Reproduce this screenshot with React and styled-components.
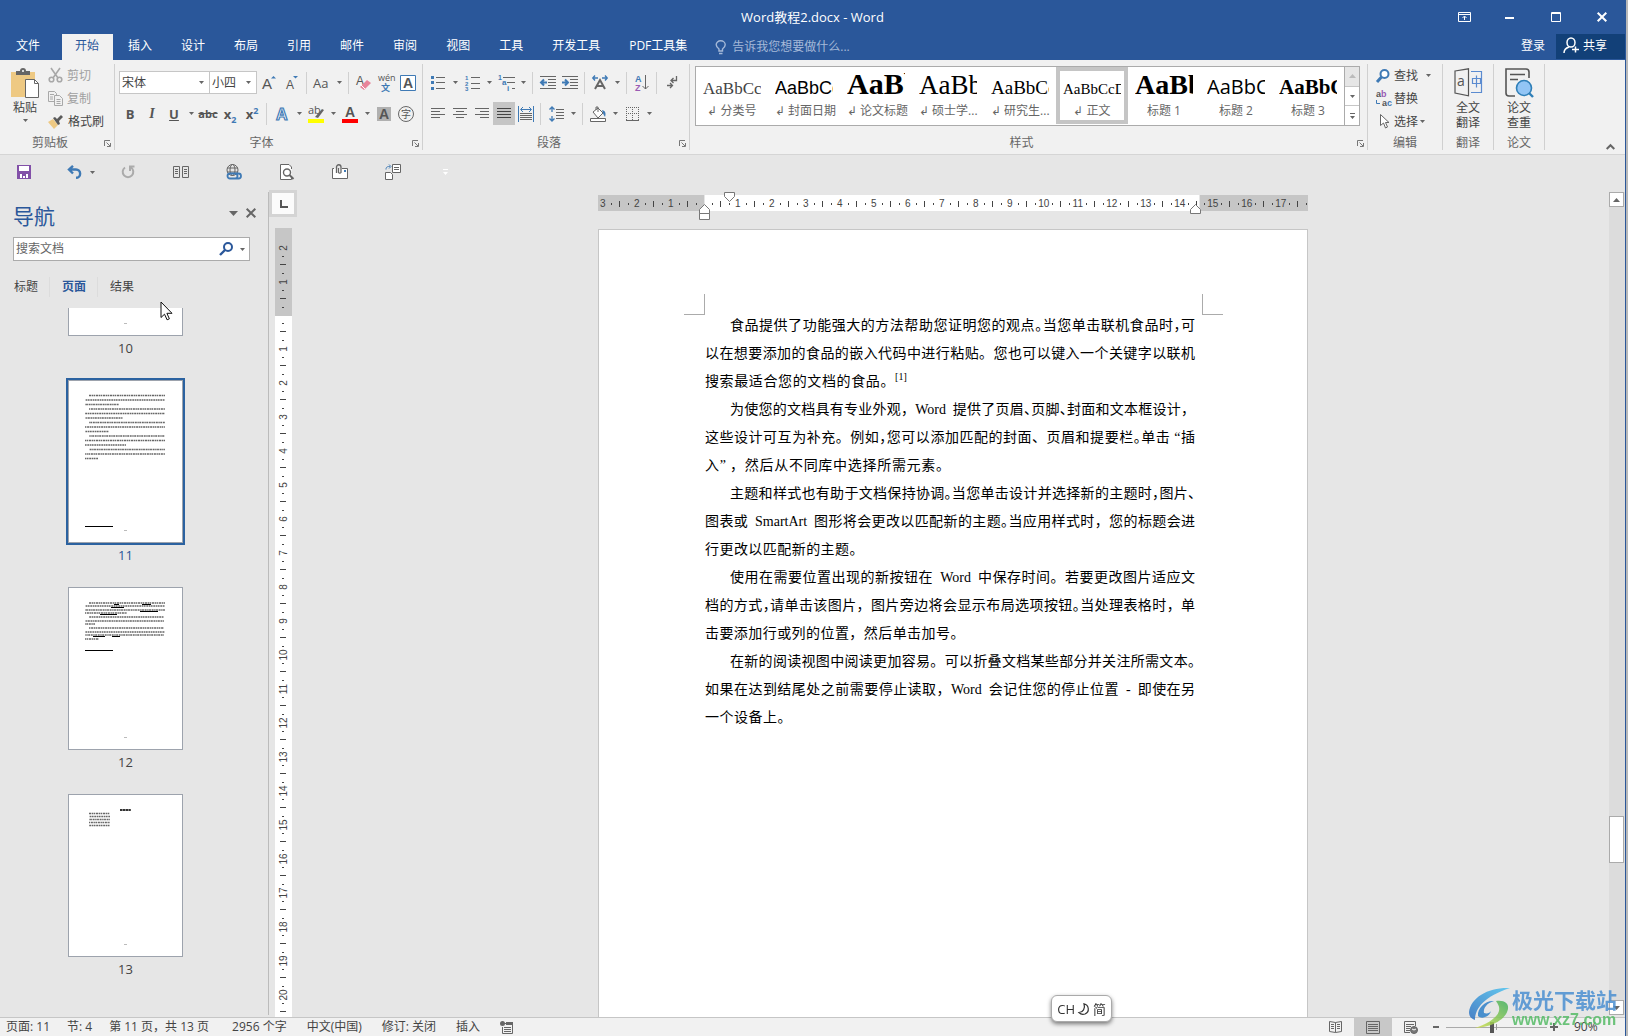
import React from "react";
import styled, { createGlobalStyle, css } from "styled-components";

const ui = `"Open Sans", "Noto Sans CJK SC", sans-serif`;
const c = {
  blue: "#2a579a",
  text: "#444",
  dim: "#666",
  off: "#a0a0a0",
  icon: "#666",
  accent: "#3f7ab5",
  line: "#d0d0d0",
  bg: "#e6e6e6",
  ribbon: "#f1f1f1",
};

const Global = createGlobalStyle`
  * { box-sizing: border-box; }
  body { margin: 0; background: #b9b9b9; overflow: hidden; }
  button, input, select { font: inherit; color: inherit; margin: 0; padding: 0; border: 0; background: none; }
  button { white-space: nowrap; }
  svg { display: block; flex: none; overflow: visible; }
`;

const Window = styled.div`
  display: flex;
  flex-direction: column;
  height: 100vh;
  margin-right: 2px;
  border-right: 1px solid ${c.blue};
  background: ${c.bg};
  color: ${c.text};
  font: 12px/16px ${ui};
`;

/* ---------- header ---------- */
const Header = styled.header`
  background: ${c.blue};
  color: #fff;
`;
const TitleBar = styled.div`
  display: grid;
  grid-template-columns: 1fr auto 1fr;
  align-items: center;
  height: 34px;
`;
const Title = styled.h1`
  grid-column: 2;
  margin: 0;
  font-size: 13px;
  font-weight: 400;
`;
const WindowButtons = styled.div`
  display: flex;
  justify-content: flex-end;
`;
const WindowButton = styled.button`
  display: grid;
  place-items: center;
  width: 46px;
  height: 32px;
`;
const TabRow = styled.nav`
  display: flex;
  align-items: stretch;
  gap: 2px;
  height: 26px;
  padding-left: 3px;
`;
const Tab = styled.button`
  padding: 0 14px 2px 13px;
  ${(p) => p.$file && "margin-right: 6px;"}
  ${(p) => p.$active && css`
    background: ${c.ribbon};
    color: ${c.blue};
  `}
`;
const TellMe = styled.label`
  display: flex;
  flex: 1;
  align-items: center;
  gap: 5px;
  padding-left: 12px;
  color: #a5b9d8;
`;
const TellInput = styled.input`
  flex: 1;
  min-width: 0;
  &::placeholder { color: #a5b9d8; opacity: 1; }
`;
const SignIn = styled.button`
  padding: 0 9px 2px;
`;
const Share = styled.button`
  display: flex;
  align-items: center;
  gap: 4px;
  width: 69px;
  height: 25px;
  padding: 0 0 2px 7px;
  background: #124078;
`;

/* ---------- ribbon ---------- */
const Ribbon = styled.section`
  display: flex;
  height: 95px;
  padding: 4px 0;
  background: ${c.ribbon};
  border-bottom: 1px solid #d5d5d5;
`;
const Group = styled.section`
  display: flex;
  flex-direction: column;
  flex: ${(p) => (p.$w ? `0 0 ${p.$w}px` : "1 1 0")};
  min-width: 0;
  border-right: 1px solid ${c.line};
`;
const GroupBody = styled.div`
  flex: 1;
  min-height: 0;
  padding: ${(p) => p.$pad || "7px 0 0 4px"};
`;
const CaptionRow = styled.div`
  display: flex;
  align-items: center;
  height: 14px;
  color: ${c.dim};
`;
const Caption = styled.span`
  flex: 1;
  text-align: center;
`;
const Launcher = styled.button`
  display: grid;
  place-items: center;
  width: 14px;
  height: 14px;
`;
const ToolRow = styled.div`
  display: flex;
  align-items: center;
  height: 23px;
  margin-bottom: 8px;
`;
const Tool = styled.button`
  display: grid;
  place-items: center;
  width: 22px;
  height: 23px;
  background: ${(p) => (p.$on ? "#c5c5c5" : "none")};
`;
const CaretButton = styled.button`
  display: grid;
  place-items: center;
  width: 12px;
  height: 23px;
`;
const Sep = styled.span`
  width: 1px;
  height: 22px;
  margin: 0 4px 0 3px;
  background: ${c.line};
`;
const Combo = styled.div`
  position: relative;
  width: ${(p) => p.$w}px;
  height: 23px;
  margin-right: ${(p) => p.$after || 0}px;
  border: 1px solid #c6c6c6;
  background: #fff;
  & + & { border-left: 0; }
  svg { position: absolute; right: 5px; top: 9px; pointer-events: none; }
`;
const Select = styled.select`
  width: 100%;
  height: 21px;
  padding-left: 2px;
  appearance: none;
`;
const Clip = styled.div`
  display: flex;
  align-items: flex-start;
  gap: 9px;
`;
const BigButton = styled.button`
  display: flex;
  flex-direction: column;
  align-items: center;
  width: ${(p) => p.$w}px;
  padding-top: 4px;
  line-height: 15px;
  white-space: normal;
  svg { margin-bottom: ${(p) => p.$gap}px; }
  svg + span + svg { margin: 4px 0 0; }
`;
const SmallList = styled.div`
  display: flex;
  flex-direction: column;
`;
const SmallButton = styled.button`
  display: flex;
  align-items: center;
  gap: ${(p) => p.$gap || 4}px;
  height: 23px;
  color: ${(p) => (p.$off ? c.off : c.text)};
`;
const Letter = styled.span`
  font: ${(p) => p.$font};
  text-decoration: ${(p) => p.$deco || "none"};
  color: #555;
  sub, sup { font-size: 9px; line-height: 0; color: ${c.accent}; }
`;
const Gallery = styled.div`
  display: flex;
  height: 60px;
  border: 1px solid #ababab;
  background: #fff;
`;
const GalleryItems = styled.div`
  display: flex;
  flex: 1;
  min-width: 0;
  overflow: hidden;
`;
const StyleItem = styled.button`
  flex: 0 0 72px;
  width: 72px;
  min-width: 0;
  height: 57px;
  padding: 0 7px;
  color: ${c.dim};
  ${(p) => p.$on && "outline: 4px solid #c5c5c5; outline-offset: -4px;"}
`;
const Sample = styled.span`
  display: block;
  width: 58px;
  height: 30px;
  overflow: hidden;
  text-align: left;
  color: #000;
  font: 28px/26px "Liberation Serif", serif;
`;
const SampleText = styled.span`
  font: ${(p) => p.$font};
  line-height: 0;
  ${(p) => p.$thin && "color: #444;"}
`;
const StyleName = styled.span`
  display: block;
  line-height: 18px;
`;
const GalleryNav = styled.div`
  display: flex;
  flex-direction: column;
  width: 15px;
  border-left: 1px solid #ababab;
`;
const GalleryStep = styled.button`
  display: grid;
  place-items: center;
  flex: 1;
  & + & { border-top: 1px solid #c6c6c6; }
  &:disabled { background: #e6e6e6; }
`;
const RibbonEnd = styled.div`
  display: flex;
  flex: 0 0 80px;
  align-items: flex-end;
  justify-content: flex-end;
  padding: 0 10px 0 0;
`;

/* ---------- quick access ---------- */
const QuickBar = styled.div`
  display: flex;
  flex: none;
  height: 35px;
`;
const Quick = styled.button`
  display: flex;
  align-items: center;
  justify-content: center;
  gap: 8px;
  width: 53px;
  height: 34px;
  &:first-child { width: 48px; }
  ${(p) => p.$split && "padding-left: 12px;"}
`;

/* ---------- body ---------- */
const Main = styled.main`
  display: flex;
  flex: 1;
  min-height: 0;
`;
const Pane = styled.aside`
  position: relative;
  display: flex;
  flex-direction: column;
  flex: 0 0 269px;
  margin: 2px 0;
  padding: 12px 0 0 13px;
  border-right: 1px solid #bbb;
`;
const PaneHead = styled.div`
  display: flex;
  align-items: flex-start;
  gap: 8px;
  height: 24px;
  padding-right: 12px;
`;
const PaneTitle = styled.h2`
  flex: 1;
  margin: 0;
  font-size: 21px;
  line-height: 24px;
  font-weight: 400;
  color: ${c.blue};
`;
const PaneButton = styled.button`
  display: grid;
  place-items: center;
  height: 18px;
`;
const SearchBox = styled.form`
  display: flex;
  align-items: center;
  gap: 7px;
  height: 24px;
  margin: 9px 18px 0 0;
  padding: 0 4px 0 2px;
  border: 1px solid #ababab;
  background: #fff;
`;
const SearchInput = styled.input`
  flex: 1;
  min-width: 0;
  outline: 0;
  &::placeholder { color: #666; opacity: 1; }
`;
const PaneTabs = styled.div`
  display: flex;
  height: 20px;
  margin-top: 16px;
`;
const PaneTab = styled.button`
  padding: 0 11px 0 13px;
  &:first-child { padding-left: 1px; }
  & + & { border-left: 1px solid #dcdcdc; padding-left: 12px; }
  ${(p) => p.$on && `color: ${c.blue}; font-weight: 700;`}
`;
const ThumbView = styled.div`
  flex: 1;
  min-height: 0;
  margin: 11px 17px 0 0;
  overflow: hidden;
`;
const ThumbList = styled.div`
  display: flex;
  flex-direction: column;
  align-items: center;
  gap: 20px;
  margin: -135px 13px 0 0;
`;
const ThumbItem = styled.button`
  color: ${(p) => (p.$on ? c.blue : c.text)};
`;
const Sheet = styled.span`
  display: block;
  width: 115px;
  height: 163px;
  border: 1px solid #9da3ad;
  background: #fff;
  ${(p) => p.$on && "outline: 2px solid #2b62a0;"}
`;
const ThumbNo = styled.span`
  display: block;
  line-height: 24px;
  font-size: 13px;
`;
const Pointer = styled.svg`
  position: absolute;
  left: 160px;
  top: 109px;
`;

const RulerColumn = styled.div`
  display: flex;
  flex-direction: column;
  align-items: center;
  flex: 0 0 28px;
  overflow: hidden;
`;
const TabStop = styled.button`
  display: grid;
  flex: none;
  place-items: center;
  width: 28px;
  height: 27px;
  margin-bottom: 11px;
  border: 3px solid #d4d4d4;
  background: #fbfbfb;
`;
const dir = (p) => (p.$v ? "column" : "row");
const Scale = styled.div`
  display: flex;
  flex-direction: ${dir};
  flex: ${(p) => (p.$len ? `0 0 ${p.$len}px` : "1 1 0")};
  ${(p) => (p.$v ? "width: 17px; min-height: 0;" : "height: 16px; min-width: 0;")}
  padding: ${(p) => p.$pad || 0};
  justify-content: ${(p) => (p.$end ? "flex-end" : "flex-start")};
  overflow: hidden;
  background: ${(p) => (p.$gray ? "#c6c6c6" : "#fff")};
`;
const Unit = styled.span`
  display: grid;
  flex: none;
  place-items: center;
  font: 10px/10px "Liberation Sans", sans-serif;
  ${(p) => p.$v
    ? `width: 17px; height: ${p.$n === 1 ? 8 : p.$n === 2 ? 17 : 34}px; grid-template-rows: repeat(${p.$n}, 1fr);`
    : `height: 18px; width: ${p.$n === 1 ? 8 : p.$n === 2 ? 17 : 34}px; grid-template-columns: repeat(${p.$n}, 1fr);`}
  grid-auto-flow: ${dir};
  white-space: nowrap;
`;
const Num = styled.span`
  ${(p) => p.$v ? "height: 8px; display: grid; place-items: center; transform: rotate(-90deg);" : "width: 8px; display: flex; justify-content: center;"}
`;
const Dot = styled.i`
  width: ${(p) => (p.$v ? 2 : 1)}px;
  height: ${(p) => (p.$v ? 1 : 2)}px;
  background: #444;
`;
const Bar = styled.i`
  width: ${(p) => (p.$v ? 6 : 1)}px;
  height: ${(p) => (p.$v ? 1 : 6)}px;
  background: #444;
`;
const Canvas = styled.div`
  display: flex;
  flex: 1;
  flex-direction: column;
  align-items: center;
  min-width: 0;
  padding-top: 5px;
`;
const RulerRow = styled.div`
  position: relative;
  display: flex;
  flex: none;
  gap: 1px;
  width: 710px;
  margin-bottom: 18px;
`;
const Marker = styled.svg`
  position: absolute;
  left: ${(p) => p.$x}px;
  top: ${(p) => p.$y}px;
`;
const Page = styled.article`
  position: relative;
  flex: 1;
  width: 710px;
  min-height: 0;
  padding: 82px 112px 0 106px;
  border: 1px solid #c6c6c6;
  border-bottom: 0;
  background: #fff;
  color: #000;
  font: 400 14px/28px "Liberation Serif", "Noto Sans CJK SC", serif;
`;
const Corner = styled.i`
  position: absolute;
  top: 64px;
  width: 21px;
  height: 21px;
  border-bottom: 1px solid #ababab;
  ${(p) => p.$right ? "right: 84px; border-left: 1px solid #ababab;" : "left: 85px; border-right: 1px solid #ababab;"}
`;
const Para = styled.p`
  margin: 0;
`;
const Line = styled.span`
  display: block;
  width: ${(p) => (p.$cells ? `calc(100% * ${p.$cells} / 34)` : "100%")};
  padding-left: ${(p) => (p.$first ? 25 : 0)}px;
  text-align: justify;
  text-align-last: justify;
  white-space: nowrap;
`;
const Tight = styled.span`
  font-feature-settings: "halt";
`;
const Latin = styled.span`
  margin: 0 3px;
`;
const Note = styled.sup`
  font-size: 10px;
  line-height: 0;
`;

const ScrollBar = styled.div`
  display: flex;
  flex-direction: column;
  flex: 0 0 16px;
  margin: 2px 0;
  background: #dcdcdc;
`;
const ScrollButton = styled.button`
  display: grid;
  place-items: center;
  height: 15px;
  width: 15px;
  border: 1px solid #ababab;
  background: #fff;
`;
const ScrollTrack = styled.div`
  display: flex;
  flex: 1;
  flex-direction: column;
`;
const ScrollSpace = styled.span`
  flex: ${(p) => p.$grow};
`;
const ScrollThumb = styled.button`
  width: 15px;
  height: 47px;
  border: 1px solid #ababab;
  background: #fff;
`;

/* ---------- status bar ---------- */
const Status = styled.footer`
  display: flex;
  align-items: center;
  flex: none;
  gap: 20px;
  height: 19px;
  padding-left: 6px;
  border-top: 1px solid #c6c6c6;
  background: ${c.ribbon};
`;
const StatusTight = styled.div`
  display: flex;
  gap: 17px;
  margin-right: 3px;
`;
const StatusRight = styled.div`
  display: flex;
  align-items: center;
  margin-left: auto;
  padding-right: 24px;
`;
const View = styled.button`
  display: grid;
  place-items: center;
  width: 38px;
  height: 18px;
  background: ${(p) => (p.$on ? "#c8c8c8" : "none")};
`;
const ZoomButton = styled.button`
  width: 10px;
  height: 16px;
  margin-left: ${(p) => p.$before || 0}px;
`;
const Zoom = styled.input`
  appearance: none;
  width: 101px;
  height: 12px;
  margin: 0 3px;
  background:
    linear-gradient(#999, #999) center / 1px 6px no-repeat,
    linear-gradient(#aaa, #aaa) center / 100% 1px no-repeat;
  &::-webkit-slider-thumb {
    appearance: none;
    width: 4px;
    height: 11px;
    background: #555;
  }
`;
const ZoomText = styled.output`
  width: 27px;
  margin-left: 14px;
`;

const Ime = styled.div`
  position: fixed;
  right: 516px;
  bottom: 14px;
  display: flex;
  align-items: center;
  gap: 3px;
  height: 27px;
  padding: 0 5px;
  border: 1px solid #aaa;
  border-radius: 6px;
  background: #fff;
  color: #333;
  box-shadow: 0 2px 4px rgba(0, 0, 0, 0.5);
  font: 13px/16px ${ui};
`;
const Watermark = styled.div`
  position: fixed;
  right: 11px;
  bottom: 7px;
  display: flex;
  align-items: center;
  gap: 1px;
  opacity: 0.85;
  pointer-events: none;
`;
const MarkText = styled.div`
  display: flex;
  flex-direction: column;
  color: #4a8fd0;
  font: 700 21px/24px "Noto Sans CJK SC", sans-serif;
`;
const MarkUrl = styled.span`
  color: #55bb66;
  font: 700 16px/18px "Liberation Sans", sans-serif;
`;

/* ---------- icons ---------- */
const Ic = ({ w = 16, h = 16, children, s = c.icon, sw = 1, ...r }) => (
  <svg width={w} height={h} viewBox={`0 0 ${w} ${h}`} fill="none" stroke={s} strokeWidth={sw} aria-hidden="true" {...r}>
    {children}
  </svg>
);
const Caret = ({ fill = "#666", w = 5 }) => (
  <Ic w={w} h={w === 5 ? 3 : 5} s="none"><path d={w === 5 ? "M0 0h5L2.5 3z" : "M0 0h9L4.5 5z"} fill={fill} /></Ic>
);
const CaretUp = ({ fill }) => <Ic w={7} h={4} s="none"><path d="M0 4h7L3.5 0z" fill={fill} /></Ic>;
const CaretDown = ({ fill = "#666" }) => <Ic w={7} h={4} s="none"><path d="M0 0h7L3.5 4z" fill={fill} /></Ic>;
const H = (rows, x = 1) => rows.map(([a, b], i) => <path key={i} d={`M${a} ${x + i * 3 + 0.5}H${b}`} />);
const T = ({ x, y, size = 10, fill = "#555", bold, family = "Liberation Sans", children, ...r }) => (
  <text x={x} y={y} fontSize={size} fill={fill} stroke="none" fontWeight={bold ? 700 : 400} fontFamily={`"${family}", "Noto Sans CJK SC", sans-serif`} {...r}>{children}</text>
);

const I = {
  ribbonOpt: <Ic w={13} h={10} s="#fff"><path d="M.5.5h12v9H.5zM.5 2.5h12M6.5 8V4.500M4.500 6l2-2 2 2" /></Ic>,
  min: <Ic w={10} h={10} s="#fff" sw={2}><path d="M0 6h9" /></Ic>,
  max: <Ic w={10} h={10} s="#fff"><path d="M.5.5h9v9h-9zM0 1.500h10" /></Ic>,
  close: <Ic w={10} h={10} s="#fff" sw={2}><path d="M.7.7l8.600 8.600M9.300.7L.7 9.300" /></Ic>,
  bulb: <Ic w={12} h={15} s="#a5b9d8" sw={1.4}><path d="M4 11V9C2 7.500 1.200 6.500 1.200 4.800a4.500 4 0 0 1 9 0C10.200 6.500 9.500 7.500 7.500 9v2zM4 13.500h3.500" /></Ic>,
  share: <Ic w={16} h={17} s="#fff" sw={1.5}><ellipse cx="8" cy="5.500" rx="4" ry="4.600" /><path d="M1 16c0-3 2-5 5-6M12.500 9.500v6M9 12.500h7" /></Ic>,
  paste: (
    <Ic w={29} h={31} s="none">
      <path d="M0 4h24v25H0z" fill="#eec983" /><path d="M5 7V3h4a3 3 0 0 1 6 0h4v4z" fill="#666" />
      <path d="M14.500 11.500h9l4 4v14h-13z" fill="#fff" stroke="#666" /><path d="M23.500 11.500v4h4" stroke="#666" /><circle cx="12" cy="3" r="1" fill="#fff" />
    </Ic>
  ),
  cut: <Ic w={15} h={15} s="#a8a8a8" sw={1.6}><path d="M3 0l7 10M12 0L5 10" /><circle cx="3.500" cy="11.500" r="2.300" /><circle cx="11.500" cy="11.500" r="2.300" /></Ic>,
  copy: <Ic w={15} h={15} s="#a8a8a8"><path d="M6 10.500H.5v-10h6l2 2V4M2 3.500h4M2 6h3M2 8h3M6.500 4.500h5l3 3v7h-8zM8.500 8.500h4M8.500 10.500h4M8.500 12.500h4" /></Ic>,
  brush: <Ic w={16} h={14} s="none"><path d="M0 7l5-3 5 6-4 4z" fill="#eec983" /><path d="M5 3l2-1 2 2 4-4 2 2-4 4 1 3-2 1z" fill="#5a5a5a" /></Ic>,
  grow: <Ic><T x={0} y={14} size={15}>A</T><path d="M9 3.500h5L11.500 1z" fill={c.accent} stroke="none" /></Ic>,
  shrink: <Ic><T x={2} y={14} size={12}>A</T><path d="M9 1h5l-2.500 2.500z" fill={c.accent} stroke="none" /></Ic>,
  caseAa: <Ic w={18} h={16}><T x={0} y={13} size={13} family="Open Sans">Aa</T></Ic>,
  eraser: <Ic><T x={0} y={10} size={12}>A</T><path d="M4 12l7-7 4 3-7 7z" fill="#e8849a" stroke="none" /><path d="M4 9l5 5" stroke="#fff" /></Ic>,
  pinyin: <Ic w={18} h={18}><T x={1} y={7} size={9} family="Open Sans">wén</T><T x={4} y={17} size={9} fill={c.accent} bold>文</T></Ic>,
  boxA: <Ic w={16} h={16} s={c.accent}><path d="M.5.5h15v15H.5z" fill="#fff" /><T x={3} y={13} size={14} bold>A</T></Ic>,
  outlineA: <Ic w={16} h={16}><T x={2} y={14} size={16} fill="#fff" bold style={{ stroke: c.accent, strokeWidth: 1.2 }}>A</T></Ic>,
  highlight: <Ic w={16} h={18}><T x={0} y={9} size={11} family="Open Sans">ab</T><path d="M7 12l7-8 2 1-6 8z" fill="#666" stroke="none" /><path d="M0 14h16v4H0z" fill="#ff0" stroke="none" /></Ic>,
  fontColor: <Ic w={16} h={18}><T x={3} y={12} size={14} bold>A</T><path d="M0 14h16v4H0z" fill="#f00" stroke="none" /></Ic>,
  shadeA: <Ic w={14} h={14}><path d="M0 0h14v14H0z" fill="#b0b0b0" stroke="none" /><T x={2} y={12} size={14} bold>A</T></Ic>,
  ring: <Ic w={16} h={16}><circle cx="8" cy="8" r="7.500" /><T x={3} y={12} size={10}>字</T></Ic>,
  bullets: <Ic w={14} h={15}><path d="M5 2.500h9M5 7.500h9M5 13.500h9" /><path d="M0 1h3v3H0zM0 6h3v3H0zM0 12h3v3H0z" fill={c.accent} stroke="none" /></Ic>,
  numbers: <Ic w={15} h={16}><path d="M6 2.500h9M6 8.500h9M6 13.500h9" />{[1, 2, 3].map((n) => <T key={n} x={0} y={n * 5.4} size={6} fill={c.accent} bold>{n}</T>)}</Ic>,
  multi: <Ic w={17} h={16}><path d="M5 2.500h12M9 7.500h8M14 13.500h3" /><T x={0} y={5} size={7} fill={c.accent} bold>1</T><T x={4} y={10} size={8} fill={c.accent} bold>a</T><T x={9} y={16} size={8} fill={c.accent} bold>i</T></Ic>,
  outdent: <Ic w={16} h={13}><path d="M0 .5h16M8 3.500h8M8 6.500h8M8 9.500h8M0 12.500h16" /><path d="M7 6.500H1M4 3.500l-3 3 3 3" stroke={c.accent} strokeWidth="2" /></Ic>,
  indent: <Ic w={16} h={13}><path d="M0 .5h16M8 3.500h8M8 6.500h8M8 9.500h8M0 12.500h16" /><path d="M0 6.500h6M3 3.500l3 3-3 3" stroke={c.accent} strokeWidth="2" /></Ic>,
  asian: <Ic><path d="M3 14L8 5l5 9M5 11h6" strokeWidth="2" /><path d="M6 3H1M3 .5L.8 3 3 5.500M10 3h5M13 .5L15.200 3 13 5.500" stroke={c.accent} strokeWidth="1.400" /></Ic>,
  sort: <Ic w={14} h={16}><T x={0} y={7} size={9} fill={c.accent} bold>A</T><T x={0} y={16} size={9} fill="#9a5cb4" bold>Z</T><path d="M10.500 0v14M7.500 11l3 3 3-3" /></Ic>,
  marks: <Ic w={11} h={13}><path d="M9.500 0v4.500H4M6.500 2L4 4.500 6.500 7M0 9.500h5M3 7l2.500 2.500L3 12" strokeWidth="1.300" /></Ic>,
  left: <Ic w={14} h={11}>{H([[0, 14], [0, 9], [0, 14], [0, 9]], 0)}</Ic>,
  center: <Ic w={14} h={11}>{H([[0, 14], [3, 11], [0, 14], [3, 11]], 0)}</Ic>,
  right: <Ic w={14} h={11}>{H([[0, 14], [5, 14], [0, 14], [5, 14]], 0)}</Ic>,
  justify: <Ic w={14} h={11} s="#444">{H([[0, 14], [0, 14], [0, 14], [0, 14]], 0)}</Ic>,
  spread: <Ic><path d="M2 7.500h12M2 9.500h12M2 11.500h12M2 13.500h12" /><path d="M.5 0v16M15.500 0v16M3 3.500h10M5 1L2.500 3.500 5 6M11 1l2.500 2.500L11 6" stroke={c.accent} /></Ic>,
  spacing: <Ic w={15} h={16}><path d="M7 3.500h8M7 6.500h8M7 9.500h8M7 12.500h8" /><path d="M3 1v5M3 10v5M.5 3.500L3 1l2.500 2.500M.5 12.500L3 15l2.500-2.500" stroke={c.accent} strokeWidth="1.300" /></Ic>,
  fill: <Ic w={17} h={16}><path d="M3 6l5-4 5 5-5 5z" fill="#fff" /><path d="M6 4V1h2v5" /><path d="M12 4c4 1 4 4 3 7-1-2-2-3-2-4z" fill={c.accent} stroke="none" /><path d="M.5 12.500h15v3H.5z" fill="#fff" /></Ic>,
  borders: <Ic w={13} h={14}><path d="M.5 0v13M6.500 0v13M12.500 0v13M0 .5h13M0 6.500h13" strokeDasharray="1 1" /><path d="M0 13.500h13" /></Ic>,
  find: <Ic w={14} h={14} s={c.accent} sw={2}><circle cx="8.500" cy="5" r="4" fill="#fff" /><path d="M5.500 8L1 13" strokeWidth="3" /></Ic>,
  replace: <Ic w={16} h={16}><T x={0} y={6} size={9} bold>a<tspan fill="#9a5cb4">b</tspan></T><T x={6} y={15} size={9} bold>a<tspan fill={c.accent}>c</tspan></T><path d="M.5 9v3.500H4" stroke={c.accent} /></Ic>,
  select: <Ic w={16} h={15}><path d="M4.500.5v11l3-2.500 2 5 2-1-2-4.500h3.500z" fill="#fff" /></Ic>,
  translate: <Ic w={28} h={29} s="#555" sw={1.200}><path d="M1 3L14.500.8v27L1 25z" /><path d="M17 3.500h10.500v21H17M18.500 10.500h8v5h-8zM22.500 7.500v12" stroke="#5b8bd0" /><T x={3} y={18} size={14} family="Open Sans">a</T></Ic>,
  paper: <Ic w={28} h={30} s="#555" sw={1.600}><path d="M24 10V4a3 3 0 0 0-3-3H1v24a3 3 0 0 0 3 3h6M5 6.500h15M5 11.500h8" /><circle cx="19" cy="20" r="7.500" fill="#92c5f5" stroke="#2f7fb8" /><path d="M24 25l4 4" stroke="#2f7fb8" strokeWidth="2.400" /></Ic>,
  launcher: <Ic w={7} h={7} s="#777"><path d="M.5 6V.5H6M2.500 2.500L6 6M6.500 3v3.500H3" /></Ic>,
  collapse: <Ic w={9} h={6} sw={2}><path d="M.7 5l3.800-3.800L8.300 5" /></Ic>,
  save: <Ic w={14} h={14} s="none"><path d="M0 0h14v14H0z" fill="#8250a8" /><path d="M2 1h10v5H2zM3 9h8v4H3z" fill="#fff" /><path d="M5 9h4v4H5z" fill="#8250a8" /><path d="M6 11h2v2H6z" fill="#fff" /></Ic>,
  undo: <Ic w={15} h={14} s={c.accent} sw={2.400}><path d="M6 .8L2 4.500l4 4M2 4.500h7a4 4 0 0 1 0 8.300" /></Ic>,
  redo: <Ic w={14} h={14} s="#ababab" sw={2}><path d="M4 2.500a5.300 5.300 0 1 0 6 0M9 6V1.500h4.500" /></Ic>,
  pages: <Ic w={16} h={12}><path d="M.5.5h6v11h-6zM9.500.5h6v11h-6zM2 3.500h3M2 5.500h3M2 7.500h3M11 3.500h3M11 5.500h3M11 7.500h3" /></Ic>,
  web: <Ic><circle cx="6.500" cy="6" r="5.500" /><ellipse cx="6.500" cy="6" rx="2.500" ry="5.500" /><path d="M1 4h11M1 8h11" /><path d="M5 9.500h4a2.500 2.500 0 0 1 0 5H4a2.500 2.500 0 0 1 0-5zM8 9.500h4.500a2.500 2.500 0 0 1 0 5H10" stroke={c.accent} strokeWidth="1.800" /></Ic>,
  preview: <Ic w={14} h={16}><path d="M11.500 5V3L9 .5H.5v15h11V14" fill="#fff" /><circle cx="7" cy="8.500" r="3.500" fill="#fff" strokeWidth="1.400" /><path d="M9.500 11l4 4" strokeWidth="2" /></Ic>,
  mail: <Ic><path d="M2 4.500H.5v10h15v-10H10" fill="#fff" /><path d="M4.500 9V3a2.200 2.200 0 0 1 4.500 0v5.500a1.500 1.500 0 0 1-2.500 0V4" strokeWidth="1.300" /><path d="M12 6h2v2h-2z" fill={c.accent} stroke="none" /></Ic>,
  flow: <Ic w={16} h={16}><path d="M.5 8.500h5l2 2v5h-7zM7.500.5h8v8h-8zM9 3.500h5M9 5.500h5" fill="#fff" /><path d="M1 5.500c0-3 2-3 4-3M4 .5l2 2-2 2" stroke={c.accent} /></Ic>,
  more: <Ic w={5} h={6} s="none"><path d="M0 0h5v1H0zM0 3h5L2.500 6z" fill="#fff" /></Ic>,
  moon: <Ic w={12} h={12} s="#333" sw={1.200}><path d="M6 .8c5 1 6 8 1 10.200-2 .7-4.500.2-6-1.500 4 0 6.500-4 5-8.700z" /></Ic>,
};

const Split = ({ icon, label }) => (
  <>
    <Tool aria-label={label}>{icon}</Tool>
    <CaretButton aria-label={`${label}选项`}><Caret /></CaretButton>
  </>
);
const Btn = ({ icon, label, on }) => <Tool $on={on} aria-label={label}>{icon}</Tool>;
const GroupFrame = ({ name, w, pad, launcher, children }) => (
  <Group $w={w}>
    <GroupBody $pad={pad}>{children}</GroupBody>
    <CaptionRow>
      <Caption>{name}</Caption>
      {launcher && <Launcher aria-label={`${name}设置`}>{I.launcher}</Launcher>}
    </CaptionRow>
  </Group>
);

const serif = `"Liberation Serif", serif`;
const bold = `700 13px/16px "Open Sans", sans-serif`;
const styleSet = [
  ["AaBbCc", `17px ${serif}`, "↲ 分类号", "thin"],
  ["AaBbCc", `500 18px "Liberation Sans", sans-serif`, "↲ 封面日期"],
  ["AaBb", `700 30px ${serif}`, "↲ 论文标题"],
  ["AaBb", `27px ${serif}`, "↲ 硕士学..."],
  ["AaBbCc", `19px ${serif}`, "↲ 研究生..."],
  ["AaBbCcDd", `15px ${serif}`, "↲ 正文"],
  ["AaBb", `700 28px ${serif}`, "标题 1"],
  ["AaBbCc", `20px "Open Sans", sans-serif`, "标题 2"],
  ["AaBbCc", `700 21px ${serif}`, "标题 3"],
];
const tabs = ["文件", "开始", "插入", "设计", "布局", "引用", "邮件", "审阅", "视图", "工具", "开发工具", "PDF工具集"];

/* {x} marks half-width punctuation, <x> marks Latin words */
const paragraphs = [
  [
    ["食品提供了功能强大的方法帮助您证明您的观点{。}当您单击联机食品时{，}可"],
    ["以在想要添加的食品的嵌入代码中进行粘贴。您也可以键入一个关键字以联机"],
    ["搜索最适合您的文档的食品。[1]", 14],
  ],
  [
    ["为使您的文档具有专业外观{，}<Word>提供了页眉{、}页脚{、}封面和文本框设计，"],
    ["这些设计可互为补充。例如{，}您可以添加匹配的封面、页眉和提要栏{。}单击 “插"],
    ["入” ，然后从不同库中选择所需元素。", 17],
  ],
  [
    ["主题和样式也有助于文档保持协调{。}当您单击设计并选择新的主题时{，}图片{、}"],
    ["图表或<SmartArt>图形将会更改以匹配新的主题{。}当应用样式时，您的标题会进"],
    ["行更改以匹配新的主题。", 11],
  ],
  [
    ["使用在需要位置出现的新按钮在<Word>中保存时间。若要更改图片适应文"],
    ["档的方式{，}请单击该图片，图片旁边将会显示布局选项按钮{。}当处理表格时，单"],
    ["击要添加行或列的位置，然后单击加号。", 18],
  ],
  [
    ["在新的阅读视图中阅读更加容易。可以折叠文档某些部分并关注所需文本{。}"],
    ["如果在达到结尾处之前需要停止读取{，}<Word>会记住您的停止位置<->即使在另"],
    ["一个设备上。", 6],
  ],
];
const rich = (s) =>
  s.split(/(\{.\}|<[^>]+>|\[1\])/).map((t, i) => {
    if (t[0] === "{") return <Tight key={i}>{t[1]}</Tight>;
    if (t[0] === "<") return <React.Fragment key={i}> <Latin>{t.slice(1, -1)}</Latin> </React.Fragment>;
    if (t === "[1]") return <Note key={i}>{t}</Note>;
    return t;
  });

const Units = ({ from, to, v, bareFirst }) => {
  const step = from > to ? -1 : 1;
  const list = [];
  for (let n = from; n !== to + step; n += step) list.push(n);
  return list.map((n, i) => (
    <Unit key={n} $v={v} $n={4}>
      {bareFirst && i === 0 ? <i /> : <Dot $v={v} />}
      <Num $v={v}>{n}</Num>
      <Dot $v={v} />
      <Bar $v={v} />
    </Unit>
  ));
};

const TextLines = ({ rows, dash = "2 .6 1.400 .5 1.800 .7", w = 1.500 }) =>
  rows.map(([x, y, x2], i) => (
    <path key={i} d={`M${x} ${y}H${x2}`} stroke="#666" strokeWidth={w} strokeDasharray={dash} strokeDashoffset={i * 1.7} />
  ));
const thumbArt = {
  10: null,
  11: (
    <>
      <TextLines rows={Array.from({ length: 15 }, (_, i) => [i % 3 ? 16 : 20, 14.5 + i * 4.5, i === 14 ? 29 : i % 3 === 2 ? [50, 54, 40, 57][(i - 2) / 3] : 96])} />
      <path d="M16 145.500h28" stroke="#000" />
    </>
  ),
  12: (
    <>
      <TextLines w={1.600} rows={[[20, 15, 96], [16, 18, 96], [16, 22, 96], [16, 25, 58], [20, 29, 95], [16, 33, 95], [16, 36, 26], [20, 40, 95], [16, 44, 96], [16, 47, 95], [16, 51, 30]]} />
      <path d="M45 16.500h5M73 16.500h9M42 19.500h13M71 23.500h18M31 26.500h17M24 48.500h12M43 48.500h8M16 62.500h28" stroke="#000" />
    </>
  ),
  13: (
    <>
      <path d="M51 15h11" stroke="#333" strokeWidth="2" strokeDasharray="2.400 .4" />
      <TextLines rows={[0, 1, 2, 3, 4].map((i) => [20, 18.5 + i * 3, 41])} />
    </>
  ),
};

export default function App() {
  return (
    <>
      <Global />
      <Window>
        <Header>
          <TitleBar>
            <Title>Word教程2.docx - Word</Title>
            <WindowButtons>
              <WindowButton aria-label="功能区显示选项">{I.ribbonOpt}</WindowButton>
              <WindowButton aria-label="最小化">{I.min}</WindowButton>
              <WindowButton aria-label="最大化">{I.max}</WindowButton>
              <WindowButton aria-label="关闭">{I.close}</WindowButton>
            </WindowButtons>
          </TitleBar>
          <TabRow>
            {tabs.map((t, i) => <Tab key={t} $file={i === 0} $active={i === 1}>{t}</Tab>)}
            <TellMe>
              {I.bulb}
              <TellInput aria-label="告诉我" placeholder="告诉我您想要做什么..." />
            </TellMe>
            <SignIn>登录</SignIn>
            <Share>{I.share}共享</Share>
          </TabRow>
        </Header>

        <Ribbon>
          <GroupFrame name="剪贴板" w={115} pad="0 0 0 11px" launcher>
            <Clip>
              <BigButton $w={28} $gap={1}>
                {I.paste}
                <span>粘贴</span>
                <Caret />
              </BigButton>
              <SmallList>
                <SmallButton $off>{I.cut}剪切</SmallButton>
                <SmallButton $off>{I.copy}复制</SmallButton>
                <SmallButton>{I.brush}格式刷</SmallButton>
              </SmallList>
            </Clip>
          </GroupFrame>

          <GroupFrame name="字体" w={308} launcher>
            <ToolRow>
              <Combo $w={91}>
                <Select aria-label="字体"><option>宋体</option></Select>
                <Caret />
              </Combo>
              <Combo $w={47} $after={2}>
                <Select aria-label="字号"><option>小四</option></Select>
                <Caret />
              </Combo>
              <Btn icon={I.grow} label="增大字号" />
              <Btn icon={I.shrink} label="减小字号" />
              <Sep />
              <Split icon={I.caseAa} label="更改大小写" />
              <Sep />
              <Btn icon={I.eraser} label="清除格式" />
              <Btn icon={I.pinyin} label="拼音指南" />
              <Btn icon={I.boxA} label="字符边框" />
            </ToolRow>
            <ToolRow>
              <Tool><Letter $font={bold}>B</Letter></Tool>
              <Tool><Letter $font={`italic 700 14px/16px ${serif}`}>I</Letter></Tool>
              <Split icon={<Letter $font={bold} $deco="underline">U</Letter>} label="下划线" />
              <Tool><Letter $font={`700 11px/16px "Open Sans", sans-serif`} $deco="line-through">abc</Letter></Tool>
              <Tool><Letter $font={bold}>x<sub>2</sub></Letter></Tool>
              <Tool><Letter $font={bold}>x<sup>2</sup></Letter></Tool>
              <Sep />
              <Split icon={I.outlineA} label="文本效果" />
              <Split icon={I.highlight} label="突出显示" />
              <Split icon={I.fontColor} label="字体颜色" />
              <Btn icon={I.shadeA} label="字符底纹" />
              <Btn icon={I.ring} label="带圈字符" />
            </ToolRow>
          </GroupFrame>

          <GroupFrame name="段落" w={267} launcher>
            <ToolRow>
              <Split icon={I.bullets} label="项目符号" />
              <Split icon={I.numbers} label="编号" />
              <Split icon={I.multi} label="多级列表" />
              <Sep />
              <Btn icon={I.outdent} label="减少缩进" />
              <Btn icon={I.indent} label="增加缩进" />
              <Sep />
              <Split icon={I.asian} label="中文版式" />
              <Sep />
              <Btn icon={I.sort} label="排序" />
              <Sep />
              <Btn icon={I.marks} label="编辑标记" />
            </ToolRow>
            <ToolRow>
              <Btn icon={I.left} label="左对齐" />
              <Btn icon={I.center} label="居中" />
              <Btn icon={I.right} label="右对齐" />
              <Btn icon={I.justify} label="两端对齐" on />
              <Btn icon={I.spread} label="分散对齐" />
              <Sep />
              <Split icon={I.spacing} label="行距" />
              <Sep />
              <Split icon={I.fill} label="底纹" />
              <Split icon={I.borders} label="边框" />
            </ToolRow>
          </GroupFrame>

          <GroupFrame name="样式" pad="2px 7px 0 5px" launcher>
            <Gallery>
              <GalleryItems>
                {styleSet.map(([text, font, name, thin], i) => (
                  <StyleItem key={name} $on={i === 5}>
                    <Sample><SampleText $font={font} $thin={thin}>{text}</SampleText></Sample>
                    <StyleName>{name}</StyleName>
                  </StyleItem>
                ))}
              </GalleryItems>
              <GalleryNav>
                <GalleryStep disabled aria-label="上一行"><CaretUp fill="#bbb" /></GalleryStep>
                <GalleryStep aria-label="下一行"><Caret /></GalleryStep>
                <GalleryStep aria-label="其他"><Ic w={5} h={6} s="none"><path d="M0 0h5v1H0zM0 3h5L2.500 6z" fill="#666" /></Ic></GalleryStep>
              </GalleryNav>
            </Gallery>
          </GroupFrame>

          <GroupFrame name="编辑" w={75} pad="0 0 0 8px">
            <SmallList>
              <SmallButton>{I.find}<span>查找</span><CaretButton as="span"><Caret /></CaretButton></SmallButton>
              <SmallButton $gap={2}>{I.replace}替换</SmallButton>
              <SmallButton $gap={2}>{I.select}选择<Caret /></SmallButton>
            </SmallList>
          </GroupFrame>
          <GroupFrame name="翻译" w={51} pad="0 0 0 11px">
            <BigButton $w={28} $gap={3}>{I.translate}<span>全文<br />翻译</span></BigButton>
          </GroupFrame>
          <GroupFrame name="论文" w={51} pad="0 0 0 11px">
            <BigButton $w={28} $gap={2}>{I.paper}<span>论文<br />查重</span></BigButton>
          </GroupFrame>
          <RibbonEnd><button aria-label="折叠功能区">{I.collapse}</button></RibbonEnd>
        </Ribbon>

        <QuickBar>
          <Quick aria-label="保存">{I.save}</Quick>
          <Quick aria-label="撤消" $split>{I.undo}<Caret /></Quick>
          <Quick aria-label="重复">{I.redo}</Quick>
          <Quick aria-label="多页">{I.pages}</Quick>
          <Quick aria-label="超链接">{I.web}</Quick>
          <Quick aria-label="打印预览">{I.preview}</Quick>
          <Quick aria-label="电子邮件">{I.mail}</Quick>
          <Quick aria-label="文本框链接">{I.flow}</Quick>
          <Quick aria-label="自定义">{I.more}</Quick>
        </QuickBar>

        <Main>
          <Pane>
            <PaneHead>
              <PaneTitle>导航</PaneTitle>
              <PaneButton aria-label="窗格选项"><Caret w={9} /></PaneButton>
              <PaneButton aria-label="关闭窗格"><Ic w={10} h={10} sw={2}><path d="M.7.7l8.600 8.600M9.300.7L.7 9.300" /></Ic></PaneButton>
            </PaneHead>
            <SearchBox>
              <SearchInput aria-label="搜索文档" placeholder="搜索文档" />
              <button type="button" aria-label="搜索">
                <Ic w={14} h={14} s={c.blue} sw={2}><circle cx="9" cy="5" r="4" /><path d="M6 8l-5 5" strokeWidth="2.400" /></Ic>
              </button>
              <button type="button" aria-label="搜索选项"><Caret /></button>
            </SearchBox>
            <PaneTabs>
              <PaneTab>标题</PaneTab>
              <PaneTab $on>页面</PaneTab>
              <PaneTab>结果</PaneTab>
            </PaneTabs>
            <ThumbView>
              <ThumbList>
                {[10, 11, 12, 13].map((n) => (
                  <ThumbItem key={n} $on={n === 11}>
                    <Sheet $on={n === 11}>
                      <Ic w={113} h={161}>
                        {thumbArt[n]}
                        <path d="M55 149.500h3" stroke="#bbb" />
                      </Ic>
                    </Sheet>
                    <ThumbNo>{n}</ThumbNo>
                  </ThumbItem>
                ))}
              </ThumbList>
            </ThumbView>
            <Pointer width="13" height="20" viewBox="0 0 13 20" aria-hidden="true">
              <path d="M1 1v15.500l3.500-3.300 2.600 5.600 2.300-1-2.500-5.500H12z" fill="#fff" stroke="#111" />
            </Pointer>
          </Pane>

          <RulerColumn>
            <TabStop aria-label="制表符"><Ic w={9} h={9} s="#555" sw={2}><path d="M2 1v7h7" /></Ic></TabStop>
            <Scale $v $gray $end $len={88} $pad="0 0 5px">
              <Units from={2} to={1} v bareFirst />
              <Unit $v $n={1}><Dot $v /></Unit>
            </Scale>
            <Scale $v $pad="3px 0 0">
              <Unit $v $n={2}><Dot $v /><Bar $v /></Unit>
              <Units from={1} to={20} v />
            </Scale>
          </RulerColumn>

          <Canvas>
            <RulerRow>
              <Scale $gray $end $len={106} $pad="0 4px 0 0">
                <Units from={3} to={1} />
                <Unit $n={1}><Dot /></Unit>
              </Scale>
              <Scale $pad="0 0 0 3px">
                <Unit $n={2}><Dot /><Bar /></Unit>
                <Units from={1} to={14} />
              </Scale>
              <Scale $gray $len={108}>
                <Units from={15} to={17} />
                <Unit $n={1}><Dot /></Unit>
              </Scale>
              <Marker $x={126} $y={-3} width="11" height="10" viewBox="0 0 11 10"><path d="M.5.5h10v4l-5 5-5-5z" fill="#fff" stroke="#777" /></Marker>
              <Marker $x={101} $y={9} width="11" height="16" viewBox="0 0 11 16"><path d="M.5 9.500v-4l5-5 5 5v4zM.5 9.500h10v6H.5z" fill="#fff" stroke="#777" /></Marker>
              <Marker $x={592} $y={9} width="11" height="10" viewBox="0 0 11 10"><path d="M.5 9.500v-4l5-5 5 5v4z" fill="#fff" stroke="#777" /></Marker>
            </RulerRow>
            <Page>
              <Corner />
              <Corner $right />
              {paragraphs.map((lines, i) => (
                <Para key={i}>
                  {lines.map(([text, cells], j) => <Line key={j} $first={j === 0} $cells={cells}>{rich(text)}</Line>)}
                </Para>
              ))}
            </Page>
          </Canvas>

          <ScrollBar>
            <ScrollButton aria-label="向上滚动"><CaretUp fill="#666" /></ScrollButton>
            <ScrollTrack>
              <ScrollSpace $grow={610} />
              <ScrollThumb aria-label="滚动条" />
              <ScrollSpace $grow={137} />
            </ScrollTrack>
            <ScrollButton aria-label="向下滚动"><CaretDown /></ScrollButton>
          </ScrollBar>
        </Main>

        <Status>
          <StatusTight>
            <span>页面: 11</span>
            <span>节: 4</span>
            <span>第 11 页，共 13 页</span>
          </StatusTight>
          <span>2956 个字</span>
          <span>中文(中国)</span>
          <span>修订: 关闭</span>
          <span>插入</span>
          <Ic w={13} h={13}><path d="M3 2.500h9.500v10h-10V6M4 6.500h7M4 8.500h7M4 10.500h7" /><path d="M6 1h7v3H6z" fill="#666" stroke="none" /><circle cx="2.500" cy="2.500" r="2.500" fill="#666" stroke="none" /></Ic>
          <StatusRight>
            <View aria-label="阅读视图"><Ic w={13} h={12}><path d="M6.500 1.500L.5.5v10l6 1 6-1V.5zM6.500 1.500v10M2 3.500h3M2 5.500h3M2 7.500h3M8 3.500h3M8 5.500h3M8 7.500h3" /></Ic></View>
            <View $on aria-label="页面视图"><Ic w={14} h={13}><path d="M.5.5h13v12H.5zM2 3.500h10M2 5.500h10M2 7.500h10M2 9.500h10" /></Ic></View>
            <View aria-label="Web 版式"><Ic w={14} h={13}><path d="M6 11.500H.5V.5h11V5M2 3.500h8M2 5.500h5M2 7.500h4M2 9.500h4" /><circle cx="10" cy="9" r="3.500" fill="#777" /><path d="M8 8l2 1 2-1" stroke="#fff" /></Ic></View>
            <ZoomButton aria-label="缩小" $before={3}><Ic w={7} h={16} sw={2}><path d="M0 8h6" /></Ic></ZoomButton>
            <Zoom type="range" min="10" max="190" defaultValue="92" aria-label="缩放" />
            <ZoomButton aria-label="放大"><Ic w={9} h={16} sw={2}><path d="M0 8h8M4 4v8" /></Ic></ZoomButton>
            <ZoomText>90%</ZoomText>
          </StatusRight>
        </Status>
      </Window>

      <Ime>CH{I.moon}简</Ime>
      <Watermark>
        <svg width="42" height="42" viewBox="0 0 42 42" aria-hidden="true">
          <defs>
            <linearGradient id="a" x1="1" y1="0" x2="0" y2="1"><stop offset="0" stopColor="#4cc3f0" /><stop offset="1" stopColor="#2d6fc0" /></linearGradient>
            <linearGradient id="b" x1="1" y1="0" x2="0" y2="1"><stop offset="0" stopColor="#3fae5e" /><stop offset="1" stopColor="#d5e04c" /></linearGradient>
          </defs>
          <path d="M41 1C20 0 2 10 0 25c0 5 3 7 6 8 0-12 10-24 35-32z" fill="url(#a)" />
          <path d="M9 29c-1-8 8-16 16-15-7 2-11 7-10 12 3 1 6 0 7-2-1 5-9 9-13 5z" fill="#2d7fc8" />
          <path d="M27 14c8-1 13 2 12 8C37 32 24 40 6 41c9-3 22-9 24-17 1-4-1-7-3-10z" fill="url(#b)" />
        </svg>
        <MarkText>极光下载站<MarkUrl>www.xz7.com</MarkUrl></MarkText>
      </Watermark>
    </>
  );
}
